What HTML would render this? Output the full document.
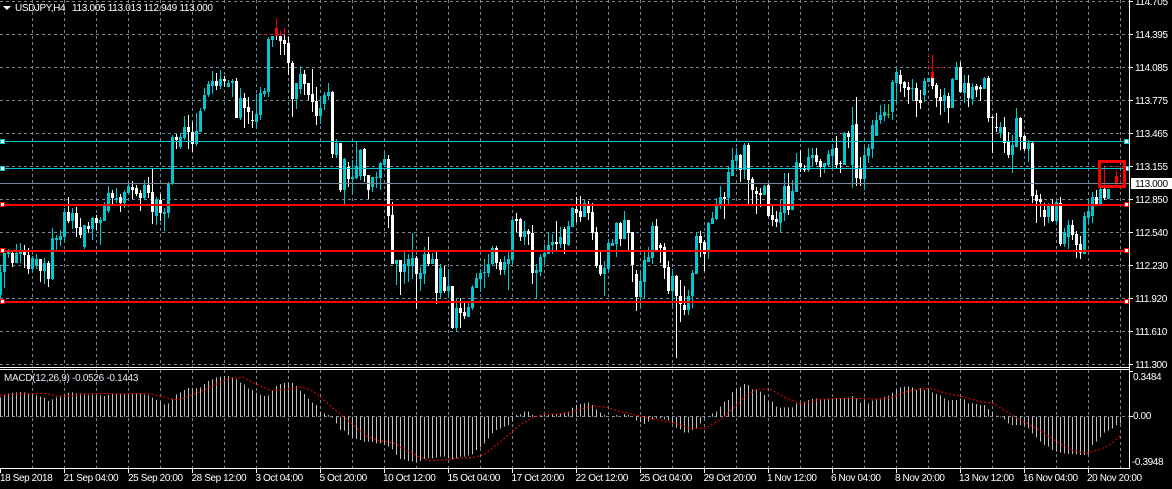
<!DOCTYPE html>
<html>
<head>
<meta charset="utf-8">
<title>USDJPY,H4</title>
<style>
html,body{margin:0;padding:0;background:#000;width:1172px;height:489px;overflow:hidden}
svg{display:block}
text{font-family:"Liberation Sans",sans-serif;font-size:10px;fill:#fff;letter-spacing:-.4px}
</style>
</head>
<body>
<svg width="1172" height="489" viewBox="0 0 1172 489" xmlns="http://www.w3.org/2000/svg">
<rect width="1172" height="489" fill="#000"/>

<!-- grid -->
<g fill="none" stroke="#778899" stroke-width="1" stroke-dasharray="3 3" shape-rendering="crispEdges">
<path d="M0 1.5H1129M0 34.5H1129M0 67.5H1129M0 100.5H1129M0 133.5H1129M0 166.5H1129M0 199.5H1129M0 232.5H1129M0 265.5H1129M0 298.5H1129M0 331.5H1129M0 364.5H1129M0 416.5H1129"/>
<path d="M32.5 0V367M64.5 0V367M96.5 0V367M128.5 0V367M160.5 0V367M192.5 0V367M224.5 0V367M256.5 0V367M288.5 0V367M320.5 0V367M352.5 0V367M384.5 0V367M416.5 0V367M448.5 0V367M480.5 0V367M512.5 0V367M544.5 0V367M576.5 0V367M608.5 0V367M640.5 0V367M672.5 0V367M704.5 0V367M736.5 0V367M768.5 0V367M800.5 0V367M832.5 0V367M864.5 0V367M896.5 0V367M928.5 0V367M960.5 0V367M992.5 0V367M1024.5 0V367M1056.5 0V367M1088.5 0V367M1120.5 0V367"/>
<path d="M32.5 370V468M64.5 370V468M96.5 370V468M128.5 370V468M160.5 370V468M192.5 370V468M224.5 370V468M256.5 370V468M288.5 370V468M320.5 370V468M352.5 370V468M384.5 370V468M416.5 370V468M448.5 370V468M480.5 370V468M512.5 370V468M544.5 370V468M576.5 370V468M608.5 370V468M640.5 370V468M672.5 370V468M704.5 370V468M736.5 370V468M768.5 370V468M800.5 370V468M832.5 370V468M864.5 370V468M896.5 370V468M928.5 370V468M960.5 370V468M992.5 370V468M1024.5 370V468M1056.5 370V468M1088.5 370V468M1120.5 370V468"/>
</g>

<!-- candles -->
<g transform="translate(.5,0)" fill="none" shape-rendering="crispEdges">
<path stroke="#00c8d0" stroke-width="1" d="M0 265V300M4 248V288M8 249V258M16 244V263M20 243V263M32 256V272M36 254V269M44 258V284M52 228V280M56 235V250M60 230V246M64 208V242M72 208V229M84 225V249M92 217V240M100 217V245M104 202V221M108 186V213M116 188V203M124 190V208M128 184V194M144 180V200M156 197V225M164 208V231M168 182V218M172 135V185M180 133V149M184 116V140M196 113V146M200 108V132M204 88V111M208 81V97M212 71V94M220 70V89M228 80V87M232 79V97M240 88V120M256 94V129M260 87V120M264 88V97M268 37V97M272 36V47M296 83V109M300 66V94M320 96V124M324 92V110M328 83V100M336 139V158M344 158V204M352 160V193M356 142V179M360 149V180M372 177V192M376 172V188M380 162V190M384 153V167M396 260V285M404 250V284M408 254V282M412 233V279M420 267V291M424 247V284M432 253V264M440 264V298M448 269V298M456 298V332M468 303V317M472 285V310M476 273V288M480 269V292M484 259V288M488 254V277M492 246V265M504 256V275M508 252V290M512 218V264M524 221V245M536 264V298M540 254V276M544 244V264M548 232V254M552 234V254M560 227V248M568 221V246M572 207V227M584 200V217M604 261V296M608 239V273M612 239V246M616 222V257M624 211V239M640 273V307M644 252V298M648 247V262M652 222V264M672 269V306M688 290V315M692 270V308M696 233V274M708 222V259M712 212V224M716 198V220M720 186V209M728 167V204M732 148V176M736 148V170M744 143V179M764 185V195M780 200V232M784 173V221M792 180V210M796 153V192M808 148V172M812 148V167M824 163V173M828 150V167M832 144V169M844 132V165M852 107V188M864 147V190M868 144V163M872 120V158M876 112V136M880 105V124M884 104V121M892 80V120M896 68V103M912 79V100M924 78V102M928 78V82M944 88V112M952 78V108M956 62V80M964 75V103M972 83V105M984 77V89M1000 122V138M1012 135V173M1016 108V147M1028 140V162M1048 203V223M1056 201V223M1064 228V247M1068 220V249M1084 212V254M1088 199V225M1092 192V223M1100 180V206M1108 189V199"/>
<path stroke="#00c8d0" stroke-width="3" d="M0 272V295M4 253V272M8 252V254M16 253V263M20 251V254M32 258V269M36 259V266M44 263V271M52 238V279M56 238V240M60 236V240M64 212V237M72 213V221M84 225V247M92 218V229M100 220V223M104 204V221M108 193V211M116 198V200M124 192V203M128 186V193M144 185V198M156 199V216M164 212V214M168 183V213M172 137V184M180 137V147M184 127V138M196 131V144M200 111V132M204 95V109M208 84V95M212 81V86M220 79V86M228 83V87M232 81V83M240 98V118M256 114V122M260 93V115M264 91V94M268 39V92M272 36V40M296 83V99M300 74V89M320 108V116M324 95V104M328 92V96M336 143V155M344 159V190M352 177V179M356 166V178M360 150V176M372 177V187M376 177V178M380 163V178M384 159V165M396 260V264M404 264V272M408 259V266M412 258V266M420 273V279M424 254V274M432 259V264M440 268V293M448 286V291M456 308V328M468 307V317M472 287V308M476 278V288M480 273V279M484 272V273M488 264V273M492 248V264M504 262V270M508 259V264M512 220V260M524 231V237M536 270V273M540 257V272M544 253V257M548 245V254M552 242V245M560 237V244M568 226V245M572 208V227M584 203V217M604 268V274M608 243V269M612 243V246M616 223V244M624 220V239M640 281V297M644 260V282M648 257V262M652 226V258M672 276V291M688 296V310M692 273V296M696 236V274M708 223V251M712 218V224M716 205V219M720 197V206M728 172V198M732 160V176M736 155V161M744 145V170M764 186V195M780 212V223M784 186V213M792 191V210M796 162V192M808 157V170M812 155V158M824 163V167M828 154V165M832 149V156M844 133V165M852 125V165M864 155V179M868 148V156M872 125V149M876 120V136M880 115V120M884 112V116M892 82V112M896 72V83M912 88V89M924 81V95M928 78V82M944 95V101M952 79V108M956 67V80M964 83V93M972 87V99M984 78V89M1000 127V133M1012 145V155M1016 118V147M1028 143V149M1048 204V217M1056 202V221M1064 232V244M1068 225V237M1084 216V254M1088 211V218M1092 197V216M1100 189V205M1108 189V199"/>
<path stroke="#fff" stroke-width="1" d="M12 250V267M24 245V268M28 248V274M40 259V282M48 261V287M68 197V223M76 207V237M80 218V238M88 222V233M96 215V230M112 190V205M120 194V212M132 181V199M136 185V196M140 190V211M148 177V198M152 169V224M160 194V221M176 134V149M188 115V149M192 122V152M216 73V90M224 76V87M236 78V118M244 93V128M248 97V124M252 111V128M276 36V40M280 36V55M284 35V55M288 37V75M292 61V117M304 70V95M308 83V100M312 69V112M316 87V125M332 91V158M340 143V192M348 162V187M364 148V182M368 175V199M388 155V228M392 202V264M400 260V295M416 256V309M428 237V266M436 251V304M444 266V293M452 286V329M460 298V328M464 301V319M496 246V269M500 259V275M516 213V232M520 218V241M528 229V245M532 225V284M556 221V252M564 227V254M576 197V222M580 196V222M588 201V220M592 203V240M596 227V268M600 252V276M620 222V246M628 220V251M632 232V282M636 270V311M656 219V252M660 243V263M664 243V279M668 261V294M676 275V358M680 280V322M684 286V315M700 231V257M704 240V271M724 192V219M740 154V182M748 143V204M752 177V206M756 187V214M760 188V207M768 184V217M772 204V226M776 211V227M788 173V215M800 150V172M804 165V172M816 148V165M820 159V177M836 136V169M840 161V173M848 131V148M856 97V186M860 157V186M900 70V92M904 81V97M908 82V104M916 83V117M920 90V109M932 78V89M936 83V107M940 89V115M948 93V123M960 62V93M968 75V107M976 84V97M980 85V101M988 76V122M992 116V153M996 113V132M1004 117V153M1008 132V158M1020 117V150M1024 135V151M1032 142V203M1036 190V223M1040 194V217M1044 203V226M1052 199V222M1060 197V246M1072 220V240M1076 231V258M1080 236V259M1096 190V204M1104 188V200M1116 186V188M1120 186V188"/>
<path stroke="#fff" stroke-width="3" d="M12 253V263M24 251V255M28 255V269M40 259V271M48 263V279M68 212V221M76 213V228M80 227V235M88 226V229M96 218V223M112 193V198M120 197V203M132 187V190M136 188V194M140 193V198M148 185V193M152 192V212M160 200V213M176 137V140M188 127V132M192 132V144M216 81V86M224 79V81M236 81V118M244 98V108M248 107V112M252 120V121M280 36V41M284 40V44M288 43V63M292 63V99M304 74V84M308 83V95M312 94V102M316 101V116M332 92V154M340 143V190M348 167V179M364 149V176M368 175V190M388 159V216M392 215V264M400 260V272M416 258V274M428 254V264M436 259V293M444 277V291M452 286V328M460 308V313M464 312V316M496 248V263M500 262V270M516 219V221M520 219V237M528 231V234M532 233V273M556 242V244M564 229V244M576 209V213M580 211V217M588 205V213M592 212V233M596 232V266M600 265V274M620 223V239M628 220V233M632 232V265M636 274V297M656 226V250M660 245V248M664 247V268M668 267V291M676 276V296M680 296V304M684 305V310M700 236V243M704 242V254M724 197V199M740 155V170M748 145V180M752 179V190M756 191V194M760 193V195M768 185V216M772 215V220M776 219V222M788 186V210M800 163V167M804 168V170M816 155V162M820 161V167M836 148V165M840 163V164M848 133V137M856 124V178M860 168V179M900 75V84M904 82V88M908 87V90M916 88V101M920 100V103M932 78V86M936 85V98M940 97V101M948 96V108M960 67V92M968 83V98M976 86V90M980 87V89M988 78V118M992 117V118M996 127V128M1004 127V143M1008 142V155M1020 118V137M1024 136V149M1032 143V196M1036 195V201M1040 199V202M1044 210V217M1052 204V221M1060 203V244M1072 225V235M1076 234V245M1080 244V253M1096 197V204M1104 189V198"/>
<path stroke="#33d633" stroke-width="1" d="M888 104V118"/>
<path stroke="#33d633" stroke-width="3" d="M888 114V115"/>
<path stroke="#f00" stroke-width="1" d="M276 18V36M280 31V36M284 28V35M932 55V78M1104 167V185M1116 170V185M1120 182V184"/>
<path stroke="#f00" stroke-width="3" d="M276 28V36M932 72V78M1116 176V183"/>
<path stroke="#a00000" stroke-width="1" stroke-dasharray="3 3" d="M262 34.5H276M928 53V67M928 67.5H950M1105 166.5H1122M1120 166V184"/>
</g>

<!-- objects -->
<g fill="none" shape-rendering="crispEdges">
<path stroke="#00c8d0" d="M0 141.5H1129M0 168.5H1129"/>
<path stroke="#778899" d="M0 183.5H1129"/>
<path stroke="#f00" stroke-width="2" d="M0 205H1129M0 251H1129M0 302H1129"/>
</g>
<g fill="#fff" shape-rendering="crispEdges" stroke-width="1">
<rect x=".5" y="139.5" width="4" height="4" stroke="#00c8d0"/>
<rect x=".5" y="166.5" width="4" height="4" stroke="#00c8d0"/>
<rect x="1124.5" y="139.5" width="4" height="4" stroke="#00c8d0"/>
<rect x="1124.5" y="166.5" width="4" height="4" stroke="#00c8d0"/>
<rect x=".5" y="202.5" width="4" height="4" stroke="#f00"/>
<rect x=".5" y="248.5" width="4" height="4" stroke="#f00"/>
<rect x=".5" y="299.5" width="4" height="4" stroke="#f00"/>
<rect x="1124.5" y="202.5" width="4" height="4" stroke="#f00"/>
<rect x="1124.5" y="248.5" width="4" height="4" stroke="#f00"/>
<rect x="1124.5" y="299.5" width="4" height="4" stroke="#f00"/>
</g>
<rect x="1099.5" y="161.5" width="25" height="25" fill="none" stroke="#f00" stroke-width="3" shape-rendering="crispEdges"/>

<!-- MACD bars (y values are 3x, offset 360) -->
<g transform="translate(.5,360) scale(1,.33333)" fill="none" stroke="#c0c0c0" stroke-width="1" shape-rendering="crispEdges">
<path d="M0 112V170M4 105V170M8 100V170M12 98V170M16 97V170M20 96V170M24 97V170M28 100V170M32 102V170M36 106V170M40 110V170M44 113V170M48 123V170M52 118V170M56 112V170M60 108V170M64 104V170M68 98V170M72 97V170M76 100V170M80 100V170M84 104V170M88 105V170M92 104V170M96 106V170M100 106V170M104 108V170M108 105V170M112 102V170M116 103V170M120 103V170M124 101V170M128 102V170M132 100V170M136 100V170M140 102V170M144 104V170M148 106V170M152 113V170M156 120V170M160 125V170M164 133V170M168 130V170M172 117V170M176 103V170M180 97V170M184 90V170M188 84V170M192 84V170M196 84V170M200 82V170M204 72V170M208 63V170M212 58V170M216 52V170M220 50V170M224 48V170M228 48V170M232 52V170M236 58V170M240 68V170M244 74V170M248 85V170M252 90V170M256 98V170M260 104V170M264 108V170M268 106V170M272 92V170M276 78V170M280 72V170M284 69V170M288 68V170M292 69V170M296 78V170M300 92V170M304 102V170M308 116V170M312 128V170M316 135V170M320 155V170M324 160V170M328 165V170M332 173V170M336 190V170M340 210V170M344 212V170M348 225V170M352 233V170M356 237V170M360 240V170M364 245V170M368 245V170M372 246V170M376 250V170M380 250V170M384 255V170M388 260V170M392 268V170M396 285V170M400 297V170M404 299V170M408 303V170M412 305V170M416 308V170M420 303V170M424 297V170M428 295V170M432 295V170M436 293V170M440 290V170M444 290V170M448 295V170M452 298V170M456 295V170M460 290V170M464 290V170M468 286V170M472 283V170M476 270V170M480 262V170M484 250V170M488 235V170M492 220V170M496 210V170M500 205V170M504 200V170M508 195V170M512 185V170M516 165V170M520 163V170M524 155V170M528 155V170M532 165V170M536 168V170M540 165V170M544 163V170M548 165V170M552 163V170M556 163V170M560 160V170M564 157V170M568 155V170M572 143V170M576 135V170M580 132V170M584 130V170M588 128V170M592 135V170M596 148V170M600 158V170M604 165V170M608 168V170M612 172V170M616 165V170M620 170V170M624 162V170M628 165V170M632 168V170M636 182V170M640 187V170M644 192V170M648 185V170M652 178V170M656 175V170M660 175V170M664 178V170M668 182V170M672 190V170M676 203V170M680 208V170M684 218V170M688 218V170M692 210V170M696 205V170M700 190V170M704 175V170M708 168V170M712 160V170M716 155V170M720 140V170M724 125V170M728 120V170M732 97V170M736 85V170M740 80V170M744 72V170M748 75V170M752 88V170M756 88V170M760 95V170M764 105V170M768 125V170M772 125V170M776 140V170M780 143V170M784 142V170M788 142V170M792 142V170M796 130V170M800 128V170M804 125V170M808 120V170M812 117V170M816 115V170M820 118V170M824 118V170M828 118V170M832 115V170M836 115V170M840 115V170M844 113V170M848 112V170M852 108V170M856 115V170M860 128V170M864 118V170M868 130V170M872 122V170M876 118V170M880 115V170M884 110V170M888 107V170M892 98V170M896 90V170M900 82V170M904 80V170M908 80V170M912 82V170M916 90V170M920 85V170M924 90V170M928 88V170M932 98V170M936 102V170M940 106V170M944 115V170M948 122V170M952 120V170M956 120V170M960 115V170M964 118V170M968 130V170M972 130V170M976 132V170M980 135V170M984 135V170M988 147V170M992 155V170M996 167V170M1000 172V170M1004 178V170M1008 190V170M1012 195V170M1016 195V170M1020 195V170M1024 200V170M1028 205V170M1032 220V170M1036 232V170M1040 245V170M1044 255V170M1048 260V170M1052 270V170M1056 275V170M1060 278V170M1064 280V170M1068 282V170M1072 282V170M1076 283V170M1080 285V170M1084 285V170M1088 282V170M1092 255V170M1096 245V170M1100 232V170M1104 218V170M1108 212V170M1112 205V170M1116 195V170M1120 190V170"/>
</g>

<!-- MACD signal -->
<g fill="none" stroke="#f00" stroke-width="3" stroke-dasharray="6 6">
<polyline transform="translate(0,360) scale(.33333)" points="0,106 60,102 120,100 150,103 170,108 210,108 250,102 300,100 360,102 440,100 480,108 520,118 540,118 570,108 600,95 650,72 690,55 730,52 760,68 790,82 815,92 860,88 900,82 930,88 960,110 1000,145 1030,170 1060,195 1100,228 1140,243 1180,248 1200,260"/>
<polyline transform="translate(400,360) scale(.33333)" points="0,262 30,275 60,292 90,302 130,300 170,295 220,292 250,285 280,262 320,230 360,195 400,172 430,163 470,162 510,158 550,145 590,138 620,142 650,152 700,163 760,177 820,188 870,205 915,205 960,180 1000,145 1040,105 1075,88 1110,87 1150,110 1200,130"/>
<polyline transform="translate(800,360) scale(.33333)" points="0,132 50,120 100,115 190,115 240,118 280,110 320,95 350,88 390,85 440,100 480,108 540,125 580,130 620,155 660,180 700,200 740,225 780,250 820,272 860,280 900,268 930,255 960,228"/>
</g>

<!-- axes -->
<g fill="none" stroke="#fff" stroke-width="1" shape-rendering="crispEdges">
<path d="M1129.5 0V468.5M0 367.5H1129M0 369.5H1129M0 468.5H1130"/>
<path d="M1129 1.5H1133M1129 34.5H1133M1129 67.5H1133M1129 100.5H1133M1129 133.5H1133M1129 166.5H1133M1129 199.5H1133M1129 232.5H1133M1129 265.5H1133M1129 298.5H1133M1129 331.5H1133M1129 364.5H1133M1129 371.5H1133M1129 416.5H1133"/>
<path d="M.5 468V473M64.5 468V473M128.5 468V473M192.5 468V473M256.5 468V473M320.5 468V473M384.5 468V473M448.5 468V473M512.5 468V473M576.5 468V473M640.5 468V473M704.5 468V473M768.5 468V473M832.5 468V473M896.5 468V473M960.5 468V473M1024.5 468V473M1088.5 468V473"/>
</g>

<!-- header -->
<path d="M3 6h8l-4 4z" fill="#fff"/>
<text x="15" y="11">USDJPY,H4</text>
<text x="72" y="11" style="letter-spacing:-.3px">113.005 113.013 112.949 113.000</text>
<text x="4" y="381" style="letter-spacing:-.3px;fill:#e4ecf4">MACD(12,26,9) -0.0526 -0.1443</text>

<!-- price labels -->
<text x="1135" y="5">114.705</text>
<text x="1135" y="38">114.395</text>
<text x="1135" y="71">114.085</text>
<text x="1135" y="104">113.775</text>
<text x="1135" y="137">113.465</text>
<text x="1135" y="170">113.155</text>
<text x="1135" y="203">112.850</text>
<text x="1135" y="236">112.540</text>
<text x="1135" y="269">112.230</text>
<text x="1135" y="302">111.920</text>
<text x="1135" y="335">111.610</text>
<text x="1135" y="368">111.300</text>
<rect x="1131" y="178" width="41" height="11" fill="#fff"/>
<text x="1135" y="187" style="fill:#000">113.000</text>
<text x="1133" y="380">0.3484</text>
<text x="1133" y="419">0.00</text>
<text x="1132" y="465">-0.3948</text>

<!-- time labels -->
<text x="0" y="481">18 Sep 2018</text>
<text x="63.5" y="481">21 Sep 04:00</text>
<text x="128" y="481">25 Sep 20:00</text>
<text x="191.5" y="481">28 Sep 12:00</text>
<text x="255.5" y="481">3 Oct 04:00</text>
<text x="319.5" y="481">5 Oct 20:00</text>
<text x="383" y="481">10 Oct 12:00</text>
<text x="447.5" y="481">15 Oct 04:00</text>
<text x="511.5" y="481">17 Oct 20:00</text>
<text x="575.5" y="481">22 Oct 12:00</text>
<text x="639.5" y="481">25 Oct 04:00</text>
<text x="703.5" y="481">29 Oct 20:00</text>
<text x="767" y="481">1 Nov 12:00</text>
<text x="831" y="481">6 Nov 04:00</text>
<text x="895" y="481">8 Nov 20:00</text>
<text x="959" y="481">13 Nov 12:00</text>
<text x="1023" y="481">16 Nov 04:00</text>
<text x="1087" y="481">20 Nov 20:00</text>
</svg>
</body>
</html>
